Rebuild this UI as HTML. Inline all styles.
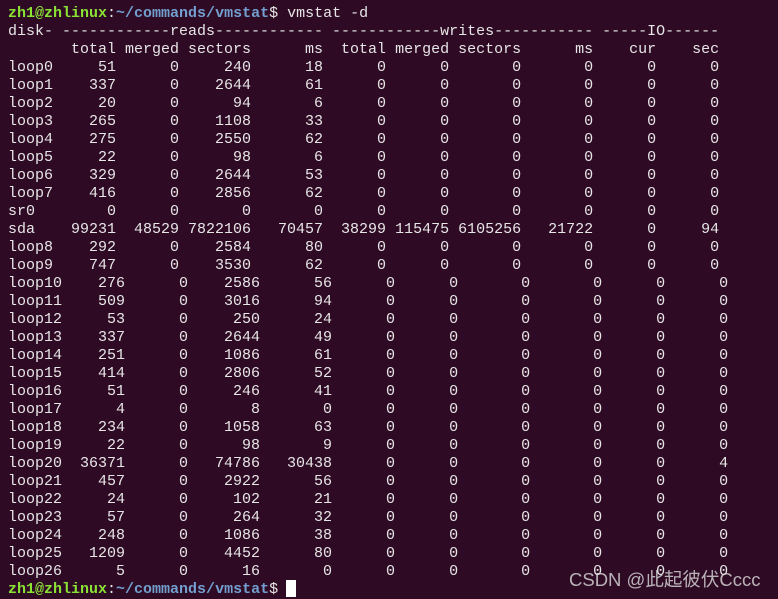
<!DOCTYPE html>
<html><head><meta charset="utf-8"><style>
html,body{margin:0;padding:0;background:#2f0a24;width:778px;height:597px;overflow:hidden}
pre{position:absolute;left:8px;top:-13px;margin:0;font-family:"Liberation Mono","DejaVu Sans Mono",monospace;font-size:15px;line-height:18px;color:#e6e6e6;white-space:pre}
.g{color:#8ae234;font-weight:bold}.b{color:#729fcf;font-weight:bold}
.cur{position:absolute;left:286px;top:580px;width:10px;height:17px;background:#fff}
.wm{position:absolute;left:569px;top:566px;font-family:"Liberation Sans","Noto Sans CJK SC",sans-serif;font-size:18.5px;color:rgba(220,220,220,0.8);white-space:nowrap}
</style></head><body>
<pre>        1234 forks
<span class="g">zh1@zhlinux</span>:<span class="b">~/commands/vmstat</span>$ vmstat -d
disk- ------------reads------------ ------------writes----------- -----IO------
       total merged sectors      ms  total merged sectors      ms    cur    sec
loop0     51      0     240      18      0      0       0       0      0      0
loop1    337      0    2644      61      0      0       0       0      0      0
loop2     20      0      94       6      0      0       0       0      0      0
loop3    265      0    1108      33      0      0       0       0      0      0
loop4    275      0    2550      62      0      0       0       0      0      0
loop5     22      0      98       6      0      0       0       0      0      0
loop6    329      0    2644      53      0      0       0       0      0      0
loop7    416      0    2856      62      0      0       0       0      0      0
sr0        0      0       0       0      0      0       0       0      0      0
sda    99231  48529 7822106   70457  38299 115475 6105256   21722      0     94
loop8    292      0    2584      80      0      0       0       0      0      0
loop9    747      0    3530      62      0      0       0       0      0      0
loop10    276      0    2586      56      0      0       0       0      0      0
loop11    509      0    3016      94      0      0       0       0      0      0
loop12     53      0     250      24      0      0       0       0      0      0
loop13    337      0    2644      49      0      0       0       0      0      0
loop14    251      0    1086      61      0      0       0       0      0      0
loop15    414      0    2806      52      0      0       0       0      0      0
loop16     51      0     246      41      0      0       0       0      0      0
loop17      4      0       8       0      0      0       0       0      0      0
loop18    234      0    1058      63      0      0       0       0      0      0
loop19     22      0      98       9      0      0       0       0      0      0
loop20  36371      0   74786   30438      0      0       0       0      0      4
loop21    457      0    2922      56      0      0       0       0      0      0
loop22     24      0     102      21      0      0       0       0      0      0
loop23     57      0     264      32      0      0       0       0      0      0
loop24    248      0    1086      38      0      0       0       0      0      0
loop25   1209      0    4452      80      0      0       0       0      0      0
loop26      5      0      16       0      0      0       0       0      0      0
<span class="g">zh1@zhlinux</span>:<span class="b">~/commands/vmstat</span>$ </pre>
<div class="cur"></div>
<div class="wm">CSDN @此起彼伏Cccc</div>
</body></html>
